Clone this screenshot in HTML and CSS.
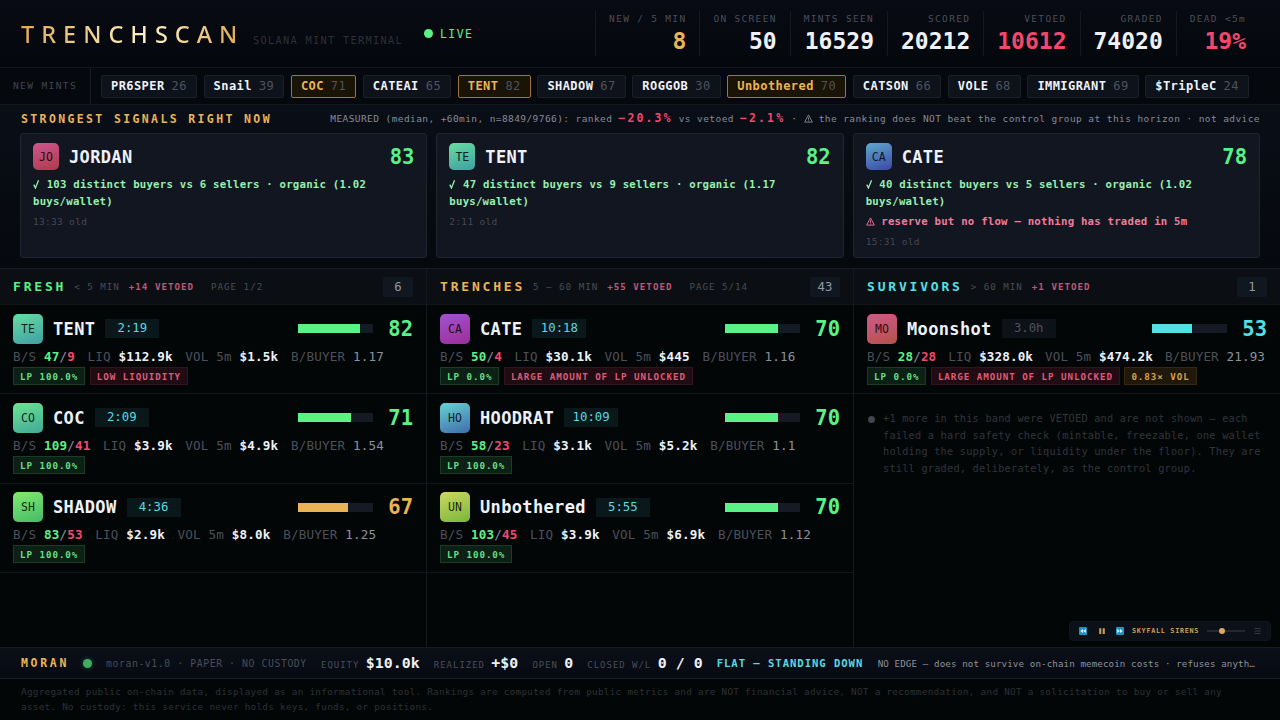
FILE: index.html
```html
<!DOCTYPE html>
<html lang="en">
<head>
    <meta charset="UTF-8">
    <meta name="viewport" content="width=device-width, initial-scale=1.0">
    <title>TRENCHSCAN</title>
    <link rel="stylesheet" href="styles.css">
</head>
<body>
    <svg class="defs" width="0" height="0">
        <symbol id="tick" viewBox="0 0 7 10"><path d="M0.8 5.6L2.4 9L5.6 1.2" fill="none" stroke="currentColor" stroke-width="1.3"/></symbol>
        <symbol id="warn" viewBox="0 0 10 10"><path d="M5 1L9.3 9H0.7ZM5 3.8V6.4M5 7.2V8.2" fill="none" stroke="currentColor" stroke-width="1" stroke-linejoin="round"/></symbol>
    </svg>

    <header class="top">
        <h1 class="logo">TRENCHSCAN</h1>
        <span class="tagline">SOLANA MINT TERMINAL</span>
        <span class="live"><i></i>LIVE</span>
        <div class="stats">
            <div class="stat"><span>NEW / 5 MIN</span><b class="gold">8</b></div>
            <div class="stat"><span>ON SCREEN</span><b>50</b></div>
            <div class="stat"><span>MINTS SEEN</span><b>16529</b></div>
            <div class="stat"><span>SCORED</span><b>20212</b></div>
            <div class="stat"><span>VETOED</span><b class="red">10612</b></div>
            <div class="stat"><span>GRADED</span><b>74020</b></div>
            <div class="stat"><span>DEAD &lt;5m</span><b class="red">19%</b></div>
        </div>
    </header>

    <div class="ticker">
        <div class="ticker-label">NEW MINTS</div>
        <div class="chips">
            <div class="chip"><b>PR6SPER</b><span>26</span></div>
            <div class="chip"><b>Snail</b><span>39</span></div>
            <div class="chip hot"><b>COC</b><span>71</span></div>
            <div class="chip"><b>CATEAI</b><span>65</span></div>
            <div class="chip hot"><b>TENT</b><span>82</span></div>
            <div class="chip"><b>SHADOW</b><span>67</span></div>
            <div class="chip"><b>ROGGOB</b><span>30</span></div>
            <div class="chip hot"><b>Unbothered</b><span>70</span></div>
            <div class="chip"><b>CATSON</b><span>66</span></div>
            <div class="chip"><b>VOLE</b><span>68</span></div>
            <div class="chip"><b>IMMIGRANT</b><span>69</span></div>
            <div class="chip"><b>$TripleC</b><span>24</span></div>
        </div>
    </div>

    <section class="signals">
        <div class="signals-head">
            <h2>STRONGEST SIGNALS RIGHT NOW</h2>
            <p>MEASURED (median, +60min, n=8849/9766): ranked <b>−20.3%</b> vs vetoed <b>−2.1%</b> · <svg class="warn-icon"><use href="#warn"/></svg> the ranking does NOT beat the control group at this horizon · not advice</p>
        </div>
        <div class="cards">
            <article class="card">
                <div class="card-head"><span class="avatar a-jordan">JO</span><h3>JORDAN</h3><b class="score">83</b></div>
                <p class="good"><svg class="tick-icon"><use href="#tick"/></svg> 103 distinct buyers vs 6 sellers · organic (1.02 buys/wallet)</p>
                <p class="old">13:33 old</p>
            </article>
            <article class="card">
                <div class="card-head"><span class="avatar a-tent">TE</span><h3>TENT</h3><b class="score">82</b></div>
                <p class="good"><svg class="tick-icon"><use href="#tick"/></svg> 47 distinct buyers vs 9 sellers · organic (1.17 buys/wallet)</p>
                <p class="old">2:11 old</p>
            </article>
            <article class="card">
                <div class="card-head"><span class="avatar a-cate">CA</span><h3>CATE</h3><b class="score">78</b></div>
                <p class="good"><svg class="tick-icon"><use href="#tick"/></svg> 40 distinct buyers vs 5 sellers · organic (1.02 buys/wallet)</p>
                <p class="bad"><svg class="warn-icon"><use href="#warn"/></svg> reserve but no flow — nothing has traded in 5m</p>
                <p class="old">15:31 old</p>
            </article>
        </div>
    </section>

    <main class="board">
        <section class="col">
            <div class="col-head"><h2 class="green">FRESH</h2><span>&lt; 5 MIN</span><span class="vetoed">+14 VETOED</span><span class="page">PAGE 1/2</span><b class="count">6</b></div>
            <div class="row">
                <div class="row-top"><span class="avatar a-tent">TE</span><h3>TENT</h3><span class="age">2:19</span><div class="bar"><i style="width:82%"></i></div><b class="score">82</b></div>
                <div class="metrics"><span>B/S <b class="green">47</b><em>/</em><b class="red">9</b></span><span>LIQ <b>$112.9k</b></span><span>VOL 5m <b>$1.5k</b></span><span>B/BUYER <em>1.17</em></span></div>
                <div class="tags"><span class="tag ok">LP 100.0%</span><span class="tag risk">LOW LIQUIDITY</span></div>
            </div>
            <div class="row">
                <div class="row-top"><span class="avatar a-coc">CO</span><h3>COC</h3><span class="age">2:09</span><div class="bar"><i style="width:71%"></i></div><b class="score">71</b></div>
                <div class="metrics"><span>B/S <b class="green">109</b><em>/</em><b class="red">41</b></span><span>LIQ <b>$3.9k</b></span><span>VOL 5m <b>$4.9k</b></span><span>B/BUYER <em>1.54</em></span></div>
                <div class="tags"><span class="tag ok">LP 100.0%</span></div>
            </div>
            <div class="row mid">
                <div class="row-top"><span class="avatar a-shadow">SH</span><h3>SHADOW</h3><span class="age">4:36</span><div class="bar"><i style="width:67%"></i></div><b class="score">67</b></div>
                <div class="metrics"><span>B/S <b class="green">83</b><em>/</em><b class="red">53</b></span><span>LIQ <b>$2.9k</b></span><span>VOL 5m <b>$8.0k</b></span><span>B/BUYER <em>1.25</em></span></div>
                <div class="tags"><span class="tag ok">LP 100.0%</span></div>
            </div>
        </section>

        <section class="col">
            <div class="col-head"><h2 class="gold">TRENCHES</h2><span>5 – 60 MIN</span><span class="vetoed">+55 VETOED</span><span class="page">PAGE 5/14</span><b class="count">43</b></div>
            <div class="row">
                <div class="row-top"><span class="avatar a-cate2">CA</span><h3>CATE</h3><span class="age">10:18</span><div class="bar"><i style="width:70%"></i></div><b class="score">70</b></div>
                <div class="metrics"><span>B/S <b class="green">50</b><em>/</em><b class="red">4</b></span><span>LIQ <b>$30.1k</b></span><span>VOL 5m <b>$445</b></span><span>B/BUYER <em>1.16</em></span></div>
                <div class="tags"><span class="tag ok">LP 0.0%</span><span class="tag risk">LARGE AMOUNT OF LP UNLOCKED</span></div>
            </div>
            <div class="row">
                <div class="row-top"><span class="avatar a-hoodrat">HO</span><h3>HOODRAT</h3><span class="age">10:09</span><div class="bar"><i style="width:70%"></i></div><b class="score">70</b></div>
                <div class="metrics"><span>B/S <b class="green">58</b><em>/</em><b class="red">23</b></span><span>LIQ <b>$3.1k</b></span><span>VOL 5m <b>$5.2k</b></span><span>B/BUYER <em>1.1</em></span></div>
                <div class="tags"><span class="tag ok">LP 100.0%</span></div>
            </div>
            <div class="row">
                <div class="row-top"><span class="avatar a-unb">UN</span><h3>Unbothered</h3><span class="age">5:55</span><div class="bar"><i style="width:70%"></i></div><b class="score">70</b></div>
                <div class="metrics"><span>B/S <b class="green">103</b><em>/</em><b class="red">45</b></span><span>LIQ <b>$3.9k</b></span><span>VOL 5m <b>$6.9k</b></span><span>B/BUYER <em>1.12</em></span></div>
                <div class="tags"><span class="tag ok">LP 100.0%</span></div>
            </div>
        </section>

        <section class="col">
            <div class="col-head"><h2 class="cyan">SURVIVORS</h2><span>&gt; 60 MIN</span><span class="vetoed">+1 VETOED</span><b class="count">1</b></div>
            <div class="row low">
                <div class="row-top"><span class="avatar a-moon">MO</span><h3>Moonshot</h3><span class="age stale">3.0h</span><div class="bar"><i style="width:53%"></i></div><b class="score">53</b></div>
                <div class="metrics"><span>B/S <b class="green">28</b><em>/</em><b class="red">28</b></span><span>LIQ <b>$328.0k</b></span><span>VOL 5m <b>$474.2k</b></span><span>B/BUYER <em>21.93</em></span></div>
                <div class="tags"><span class="tag ok">LP 0.0%</span><span class="tag risk">LARGE AMOUNT OF LP UNLOCKED</span><span class="tag warn">0.83× VOL</span></div>
            </div>
            <div class="note">
                <i></i>
                <p>+1 more in this band were VETOED and are not shown — each failed a hard safety check (mintable, freezable, one wallet holding the supply, or liquidity under the floor). They are still graded, deliberately, as the control group.</p>
            </div>
        </section>
    </main>

    <div class="player">
        <svg width="8" height="8" viewBox="0 0 8 8"><rect width="8" height="8" rx="1" fill="#1f94c4"/><path d="M4 2V6L1.3 4ZM6.8 2V6L4.1 4Z" fill="#e6f5fb"/></svg>
        <svg width="8" height="8" viewBox="0 0 8 8"><path d="M1.2 1.2H3.3V7H1.2ZM4.7 1.2H6.8V7H4.7Z" fill="#c9a058"/></svg>
        <svg width="8" height="8" viewBox="0 0 8 8"><rect width="8" height="8" rx="1" fill="#1f94c4"/><path d="M4 2V6L6.7 4ZM1.2 2V6L3.9 4Z" fill="#e6f5fb"/></svg>
        <span class="track-name">SKYFALL SIRENS</span>
        <div class="slider"><i></i></div>
        <svg class="list" width="7" height="8" viewBox="0 0 7 8"><path d="M0.5 1.5H6.5M0.5 4H6.5M0.5 6.5H6.5" stroke="#343843" stroke-width="1"/></svg>
    </div>

    <div class="agent">
        <b class="agent-name">MORAN</b>
        <i class="dot"></i>
        <span class="agent-info">moran-v1.0 · PAPER · NO CUSTODY</span>
        <span class="kv">EQUITY <b>$10.0k</b></span>
        <span class="kv">REALIZED <b>+$0</b></span>
        <span class="kv">OPEN <b>0</b></span>
        <span class="kv">CLOSED W/L <b>0 / 0</b></span>
        <span class="state">FLAT — STANDING DOWN</span>
        <span class="reason">NO EDGE — does not survive on-chain memecoin costs · refuses anyth…</span>
    </div>

    <footer>Aggregated public on-chain data, displayed as an informational tool. Rankings are computed from public metrics and are NOT financial advice, NOT a recommendation, and NOT a solicitation to buy or sell any asset. No custody: this service never holds keys, funds, or positions.</footer>
</body>
</html>
```

FILE: styles.css
```css
* {
    box-sizing: border-box;
    margin: 0;
    padding: 0;
}

body {
    position: relative;
    width: 1280px;
    height: 720px;
    overflow: hidden;
    display: flex;
    flex-direction: column;
    background: #030607;
    color: #eef1f8;
    font-family: "DejaVu Sans Mono", monospace;
}

i, em {
    font-style: normal;
}

.defs {
    position: absolute;
}

.green { color: #5af287 !important; }
.gold { color: #eab456 !important; }
.red { color: #f2486f !important; }
.cyan { color: #55e0e6 !important; }

/* header */
.top {
    flex: none;
    display: flex;
    align-items: center;
    height: 68px;
    padding: 0 21px 0 21px;
    background: linear-gradient(#080b14, #04070b);
    border-bottom: 1px solid #12161d;
}

.logo {
    width: 232px;
    font-family: "Noto Sans", "Open Sans", sans-serif;
    font-size: 23.5px;
    font-weight: 500;
    letter-spacing: 7px;
    line-height: 34px;
    white-space: nowrap;
    background: linear-gradient(90deg, #e0aa50, #fff2c8 55%, #e0aa50 95%);
    -webkit-background-clip: text;
    background-clip: text;
    color: transparent;
}

.tagline {
    width: 171px;
    margin-top: 13px;
    font-size: 10.3px;
    letter-spacing: 1.3px;
    color: #2c3039;
    white-space: nowrap;
}

.live {
    display: flex;
    align-items: center;
    gap: 7px;
    font-size: 11.5px;
    letter-spacing: 1.4px;
    color: #5af287;
}

.live i {
    width: 9px;
    height: 9px;
    border-radius: 50%;
    background: #5af287;
}

.stats {
    display: flex;
    margin-left: auto;
}

.stat {
    display: flex;
    flex-direction: column;
    align-items: flex-end;
    height: 45px;
    padding: 0 13px;
    border-left: 1px solid #151920;
    white-space: nowrap;
}

.stat span {
    font-size: 9.5px;
    letter-spacing: 1.31px;
    line-height: 15px;
    color: #4a4f5a;
}

.stat b {
    font-size: 23px;
    line-height: 30px;
}

/* new mints strip */
.ticker {
    flex: none;
    display: flex;
    height: 37px;
    background: #05080d;
    border-bottom: 1px solid #12161d;
}

.ticker-label {
    width: 91px;
    padding-left: 13px;
    border-right: 1px solid #181c23;
    font-size: 9.5px;
    letter-spacing: 1.4px;
    line-height: 36px;
    color: #41464f;
}

.chips {
    display: flex;
    align-items: center;
    gap: 6.7px;
    padding-left: 10px;
}

.chip {
    display: flex;
    gap: 7px;
    height: 23px;
    padding: 0 9px;
    border: 1px solid #1a1f28;
    border-radius: 2px;
    background: #0e131b;
    font-size: 12px;
    letter-spacing: 0.43px;
    line-height: 21px;
}

.chip span {
    color: #4d525d;
}

.chip.hot {
    border-color: #99763a;
    background: #1a1406;
}

.chip.hot b {
    color: #eab456;
}

/* strongest signals */
.signals {
    flex: none;
    height: 164px;
    padding: 4px 20px 0;
    background: linear-gradient(#0a0e17, #05080d);
    border-bottom: 1px solid #1a1e25;
}

.signals-head {
    display: flex;
    justify-content: space-between;
    height: 24px;
    padding-left: 1px;
    line-height: 20px;
    white-space: nowrap;
}

.signals-head h2 {
    font-size: 11.5px;
    letter-spacing: 2.37px;
    color: #eab456;
}

.signals-head p {
    font-size: 9.5px;
    letter-spacing: 0.41px;
    color: #868b96;
}

.signals-head b {
    font-size: 11.5px;
    letter-spacing: 2.1px;
    line-height: 12px;
    color: #f2486f;
}

.tick-icon {
    width: 7px;
    height: 10px;
    vertical-align: -1px;
}

.warn-icon {
    width: 9px;
    height: 9px;
    vertical-align: -1px;
}

.cards {
    display: grid;
    grid-template-columns: repeat(3, 1fr);
    gap: 9px;
    height: 125px;
}

.card {
    padding: 9px 12px 0;
    border: 1px solid #1f2430;
    border-radius: 3px;
    background: #121621;
}

.card-head {
    display: flex;
    align-items: center;
    gap: 10px;
    margin-bottom: 6px;
}

.avatar {
    flex: none;
    width: 30px;
    height: 30px;
    border-radius: 5px;
    font-size: 11.5px;
    line-height: 30px;
    text-align: center;
    color: rgba(0, 0, 0, 0.85);
}

.card .avatar {
    width: 26px;
    height: 27px;
    line-height: 28px;
}

.a-jordan { background: linear-gradient(160deg, #cf5590, #ad3c4b); }
.a-tent { background: linear-gradient(160deg, #66dda0, #3f9fa5); }
.a-cate { background: linear-gradient(160deg, #5fa9cc, #3c47a8); }
.a-coc { background: linear-gradient(160deg, #6be591, #42a897); }
.a-shadow { background: linear-gradient(160deg, #83ea6c, #45bb69); }
.a-cate2 { background: linear-gradient(160deg, #a253d0, #9c2d9c); }
.a-hoodrat { background: linear-gradient(160deg, #66d3d3, #3f6cac); }
.a-unb { background: linear-gradient(160deg, #cdd761, #79b73b); }
.a-moon { background: linear-gradient(160deg, #d05987, #b4524b); }

h3 {
    font-size: 17px;
    letter-spacing: 0.35px;
    line-height: 24px;
    white-space: nowrap;
}

.score {
    margin-left: auto;
    font-size: 20.5px;
    line-height: 26px;
    color: #5af287;
}

.card p {
    font-size: 10.7px;
    font-weight: 700;
    letter-spacing: 0.22px;
    line-height: 17px;
}

.card .good { color: #96efae; }

.card .bad {
    margin-top: 3px;
    color: #ef7b9b;
}

.card .old {
    margin-top: 3px;
    font-size: 9.5px;
    font-weight: 400;
    letter-spacing: 0.3px;
    color: #434854;
}

/* three age bands */
.board {
    flex: none;
    display: grid;
    grid-template-columns: 427px 427px 426px;
    height: 378px;
}

.col {
    min-width: 0;
    border-right: 1px solid #15191d;
}

.col:last-child {
    border-right: none;
}

.col-head {
    display: flex;
    align-items: center;
    height: 36px;
    padding: 0 13px;
    background: #0b0f14;
    border-bottom: 1px solid #12161b;
    white-space: nowrap;
}

.col-head h2 {
    margin-right: 8px;
    font-size: 13px;
    letter-spacing: 2.8px;
}

.col-head span {
    margin-right: 9px;
    font-size: 9.2px;
    letter-spacing: 0.99px;
    color: #474c56;
}

.col-head .vetoed {
    font-weight: 700;
    color: #b75a75;
}

.col-head .page {
    margin-left: 8px;
}

.count {
    width: 30px;
    height: 20px;
    margin-left: auto;
    border-radius: 2px;
    background: #111720;
    font-size: 12.3px;
    font-weight: 400;
    line-height: 20px;
    text-align: center;
    color: #9298a3;
}

.row {
    height: 89.3px;
    padding: 8.5px 12px 0 13px;
    border-bottom: 1px solid #12171a;
}

.row-top {
    display: flex;
    align-items: center;
    gap: 10px;
    height: 30px;
    padding-right: 1px;
}

.age {
    width: 54px;
    height: 19px;
    background: #0a181b;
    font-size: 12.3px;
    line-height: 19px;
    text-align: center;
    color: #55dbe3;
}

.age.stale {
    background: #0d1118;
    color: #4d525d;
}

.bar {
    width: 75px;
    height: 9px;
    margin-left: auto;
    background: #151a24;
}

.bar i {
    display: block;
    height: 100%;
    background: #5af287;
}

.row .score {
    width: 30px;
    margin-left: 0;
    text-align: right;
}

.mid .bar i { background: #eab456; }
.mid .score { color: #eab456; }
.low .bar i { background: #55e0e6; }
.low .score { color: #55e0e6; }

.metrics {
    display: flex;
    gap: 12.5px;
    height: 23px;
    font-size: 12.6px;
    letter-spacing: 0.17px;
    line-height: 25px;
    color: #4b505a;
    white-space: nowrap;
}

.metrics span {
    flex: none;
}

.metrics b {
    color: #eef1f8;
}

.metrics em {
    color: #8b919c;
}

.tags {
    display: flex;
    gap: 4.5px;
}

.tag {
    height: 18px;
    padding: 0 6px;
    border: 1px solid;
    font-size: 9.2px;
    font-weight: 700;
    letter-spacing: 0.95px;
    line-height: 17px;
    white-space: nowrap;
}

.tag.ok {
    border-color: #1b3c27;
    background: #0d2015;
    color: #67de88;
}

.tag.risk {
    border-color: #33141e;
    background: #210c14;
    color: #dc5c78;
}

.tag.warn {
    border-color: #35280f;
    background: #20180a;
    color: #d7a24c;
}

/* the last column is the widest line, let it run closer to the edge */
.low .metrics {
    gap: 12px;
    letter-spacing: 0.12px;
}

.note {
    display: flex;
    gap: 8px;
    padding: 16px 10px 0 14px;
}

.note i {
    flex: none;
    width: 7px;
    height: 7px;
    margin-top: 6px;
    border-radius: 50%;
    background: #41454c;
}

.note p {
    font-size: 10.3px;
    letter-spacing: 0.2px;
    line-height: 16.5px;
    color: #30353b;
}

/* music player floats over the board */
.player {
    position: absolute;
    right: 9px;
    bottom: 79px;
    display: flex;
    align-items: center;
    width: 202px;
    height: 20px;
    padding-left: 9px;
    border: 1px solid #11161e;
    border-radius: 4px;
    background: #0c1018;
}

.player svg {
    flex: none;
    margin-right: 10.5px;
}

.player svg:nth-child(3) {
    margin-right: 8px;
}

.track-name {
    font-size: 6.8px;
    font-weight: 700;
    letter-spacing: 0.7px;
    white-space: nowrap;
    color: #c9a058;
}

.slider {
    flex: none;
    width: 38px;
    height: 2px;
    margin: 0 9px 0 8px;
    background: #23272f;
}

.slider i {
    display: block;
    width: 6px;
    height: 6px;
    margin: -2px 0 0 12px;
    border-radius: 50%;
    background: #d9ab58;
}

/* paper trading agent */
.agent {
    flex: none;
    display: flex;
    align-items: center;
    height: 32px;
    padding: 0 20px 0 21px;
    background: linear-gradient(#0b0f18, #070a12);
    border-top: 1px solid #171b22;
    border-bottom: 1px solid #171b22;
    white-space: nowrap;
}

.agent-name {
    width: 62px;
    font-size: 11.5px;
    letter-spacing: 2.7px;
    color: #eab456;
}

.dot {
    width: 9px;
    height: 9px;
    margin-right: 14px;
    border-radius: 50%;
    background: #41ac62;
    box-shadow: 0 0 5px #1d5b34;
}

.agent-info {
    width: 215px;
    font-size: 9.8px;
    letter-spacing: 0.58px;
    color: #484d58;
}

.kv {
    margin-right: 14px;
    font-size: 9px;
    letter-spacing: 0.97px;
    color: #484d58;
}

.kv b {
    font-size: 14.9px;
    letter-spacing: 0.05px;
    color: #eef1f8;
}

.state {
    width: 161px;
    font-size: 10.6px;
    font-weight: 700;
    letter-spacing: 0.95px;
    color: #55dbe3;
}

.reason {
    font-size: 9.2px;
    letter-spacing: 0.1px;
    color: #8d929d;
}

footer {
    padding: 6px 20px 0 21px;
    font-size: 9.3px;
    letter-spacing: 0.29px;
    line-height: 14.5px;
    color: #2c3136;
}
```
